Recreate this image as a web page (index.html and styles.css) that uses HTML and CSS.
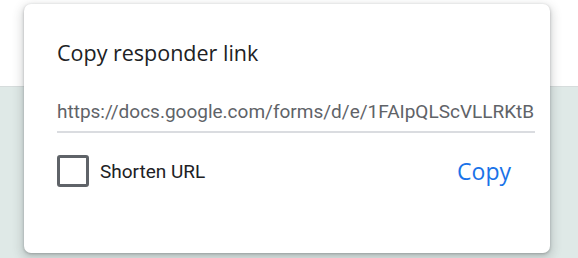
FILE: index.html
```html
<!DOCTYPE html>
<html>
<head>
<meta charset="utf-8">
<link rel="stylesheet" href="styles.css">
</head>
<body>
<div class="page">
  <div class="band-top"></div>
  <div class="band-bottom"></div>
  <div class="dialog">
    <h2 class="title">Copy responder link</h2>
    <div class="field">
      <div class="url">https://docs.google.com/forms/d/e/1FAIpQLScVLLRKtB</div>
    </div>
    <div class="actions">
      <label class="check">
        <span class="box"></span>
        <span class="check-label">Shorten URL</span>
      </label>
      <span class="copy">Copy</span>
    </div>
  </div>
</div>
</body>
</html>
```

FILE: styles.css
```css
html, body {
  margin: 0;
  padding: 0;
}
body {
  width: 578px;
  height: 258px;
  overflow: hidden;
  font-family: Roboto, "Liberation Sans", sans-serif;
}
.page {
  position: relative;
  width: 578px;
  height: 258px;
}
.band-top {
  height: 86px;
  background: #ffffff;
  border-bottom: 1px solid #d6dcdc;
}
.band-bottom {
  height: 171px;
  background: #dfe9e7;
}
.dialog {
  position: absolute;
  left: 24px;
  top: 4px;
  width: 526px;
  height: 249px;
  box-sizing: border-box;
  background: #fff;
  border-radius: 7px;
  box-shadow: 0 1px 3px rgba(60,64,67,0.35), 0 4px 10px 3px rgba(60,64,67,0.18);
  padding: 35px 15px 0 33px;
}
.title {
  margin: 0;
  font-family: "Open Sans", sans-serif;
  font-weight: 400;
  font-size: 21.5px;
  line-height: 28px;
  color: #202124;
}
.field {
  margin-top: 33px;
  border-bottom: 2px solid #dadce0;
  padding-bottom: 7px;
  overflow: hidden;
}
.url {
  font-size: 19px;
  line-height: 24px;
  color: #5f6368;
  white-space: nowrap;
  overflow: hidden;
}
.actions {
  display: flex;
  align-items: center;
  justify-content: space-between;
  margin-top: 22px;
  padding-right: 24px;
}
.check {
  display: flex;
  align-items: center;
  gap: 11px;
}
.box {
  width: 32px;
  height: 32px;
  box-sizing: border-box;
  border: 3px solid #5f6368;
  border-radius: 3px;
}
.check-label {
  font-size: 19px;
  color: #202124;
}
.copy {
  font-family: "Open Sans", sans-serif;
  font-size: 23px;
  color: #1a73e8;
  font-weight: 400;
}
```
